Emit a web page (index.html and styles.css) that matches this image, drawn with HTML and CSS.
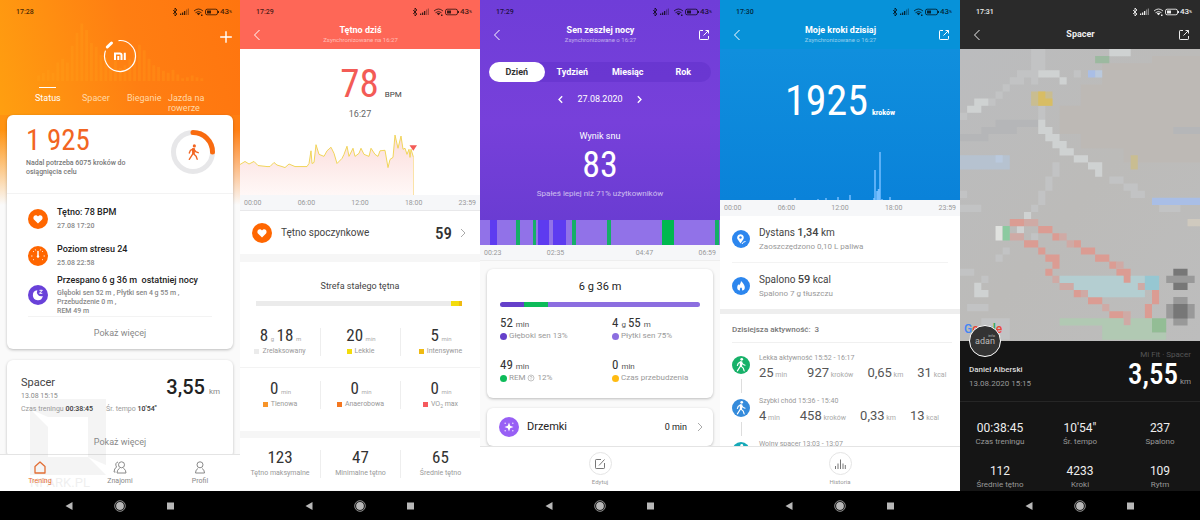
FILE: index.html
```html
<!DOCTYPE html>
<html lang="pl">
<head>
<meta charset="utf-8">
<title>Mi Fit</title>
<link rel="stylesheet" href="styles.css">
</head>
<body>
<svg class="defs" aria-hidden="true">
  <symbol id="i-status" viewBox="0 0 48 10"><g fill="none" stroke="currentColor" stroke-width=".9"><path d="M1 3l4 4-2 2V1l2 2-4 4"/><path d="M22 4q4.500-4 9 0M23.500 5.700q3-2.500 6 0"/><rect x="33.500" y="2.200" width="12" height="5.600" rx="1.700"/></g><g fill="currentColor"><path d="M8 8h1.300V6.500H8zM10 8h1.300V5.500H10zM12 8h1.300V4H12z"/><path opacity=".45" d="M14 8h1.200V2.500H14zM15.800 8H17V1.500h-1.200z"/><path d="M24.700 6.500q1.800-1.300 3.600 0L26.500 8.300zM29 7.500h1.500V9H29z"/><rect x="35" y="3.500" width="4" height="3"/><path d="M46 4h1v2h-1z"/></g></symbol>
  <symbol id="i-back" viewBox="0 0 10 12"><path d="M7.500 1L2.500 6l5 5" fill="none" stroke="currentColor"/></symbol>
  <symbol id="i-next" viewBox="0 0 10 12"><path d="M3 2l4 4-4 4" fill="none" stroke="currentColor"/></symbol>
  <symbol id="i-share" viewBox="0 0 12 12"><path d="M5 1.500H2.200Q1.500 1.500 1.500 2.200v7.600q0 .7.700.7h7.600q.7 0 .7-.7V7M7.500 1.500h3V4.500M10.500 1.500L5.500 6.500" fill="none" stroke="currentColor"/></symbol>
  <symbol id="i-heart" viewBox="0 0 20 20"><circle cx="10" cy="10" r="10" fill="#f60"/><path d="M10 14.600L6.200 10.800C4.700 9.200 5.500 6.300 7.700 6.200c1.100 0 1.900.6 2.300 1.300.4-.7 1.200-1.300 2.300-1.300 2.200.1 3 3 1.500 4.600z" fill="#fff"/></symbol>
  <symbol id="i-walk" viewBox="0 0 20 20"><g fill="none" stroke="currentColor" stroke-width="1.300" stroke-linecap="round" stroke-linejoin="round"><path d="M10 6.500L9.500 11l-3.500 5.500M9.800 11l2.700 2.500 1 3M6 10.500L7 8l3-1.500 2.500 3 2 .7"/></g><path d="M8.500 6h3l-.3 5.500H8.800z" fill="currentColor"/><circle cx="10.800" cy="3.700" r="1.500" fill="currentColor"/></symbol>
  <symbol id="i-sys-back" viewBox="0 0 10 10"><path d="M8.500 1v8L1.500 5z" fill="currentColor"/></symbol>
  <symbol id="i-sys-home" viewBox="0 0 12 12"><circle cx="6" cy="6" r="5.300" fill="none" stroke="currentColor" stroke-width=".8"/><circle cx="6" cy="6" r="3.900" fill="currentColor"/></symbol>
  <symbol id="i-sys-app" viewBox="0 0 10 10"><path d="M1 1.500h7v7H1z" fill="currentColor"/></symbol>
</svg>

<main class="phones">

<section class="phone home" aria-label="Status">
  <div class="screen">
    <div class="hero">
      <div class="statusbar"><time>17:28</time><span class="sys"><svg><use href="#i-status"/></svg>43<small>%</small></span></div>
      <div class="brand">
        <svg class="histogram" viewBox="0 0 200 70" preserveAspectRatio="none" aria-hidden="true"><path d="M10 70v-6m5 6v-9m5 9v-12m5 12v-9m5 9v-20m5 20v-24m5 24v-20m5 20v-38m5 38v-52m5 52v-62m5 62v-55m5 55v-41m5 41v-37m5 37v-28m5 28v-25m5 25v-15m5 15v-22m5 22v-14m5 14v-17m5 17v-24m5 24v-32m5 32v-39m5 39v-33m5 33v-24m5 24v-17m5 17v-15m5 15v-11m5 11v-9m5 9v-12m5 12v-7m5 7v-3m5 3v-4m5 4v-6m5 6v-4m5 4v-3" stroke="#ffa51d" stroke-width="3" opacity=".24"/></svg>
        <svg class="logo" viewBox="0 0 34 34" aria-label="Mi"><path d="M15.500 1.600a15.500 15.500 0 1 1-13 10" fill="none" stroke="#fff" stroke-width="1.200"/><path d="M4.300 8L8.500 4" stroke="#fff" stroke-width="3" stroke-linecap="round"/><path d="M12 21v-6.500h5q1.500 0 1.500 1.500v5M15.300 17v4M21.800 13.700V21" fill="none" stroke="#fff" stroke-width="2"/></svg>
        <button class="plus" aria-label="Dodaj"><svg viewBox="0 0 12 12"><path d="M6 1v10M1 6h10" stroke="#fff" stroke-width="1.200"/></svg></button>
      </div>
      <nav class="tabs"><a class="on" href="#s">Status</a><a href="#w">Spacer</a><a href="#r">Bieganie</a><a href="#b">Jazda na rowerze</a></nav>
    </div>
    <article class="card summary">
      <div class="goal">
        <div><strong class="narrow">1 925</strong><p>Nadal potrzeba 6075 kroków do osiągnięcia celu</p></div>
        <svg class="ring" viewBox="0 0 46 46"><g fill="none" stroke-width="5"><circle cx="23" cy="23" r="19.500" stroke="#e7e7e9"/><path d="M23 3.500A19.500 19.500 0 0 1 42.500 23" stroke="#f96b10" stroke-linecap="round"/></g><use href="#i-walk" x="13" y="13" width="21" height="21" color="#f26522"/></svg>
      </div>
      <ul class="facts">
        <li><svg><use href="#i-heart"/></svg><div><b>Tętno: 78 BPM</b><p>27.08 17:20</p></div></li>
        <li><svg viewBox="0 0 20 20"><circle cx="10" cy="10" r="10" fill="#f60"/><path d="M10 5.500v5" stroke="#fff" stroke-width="1.500" stroke-linecap="round"/><path d="M3 10h1.500m11 0H17M5 5l1 1m8 0l1-1M7.300 3.300l.4 1.200m5-1.200l-.4 1.200M5 14l1-.7m8 0l1 .7" stroke="#fff" stroke-width=".8"/><circle cx="10" cy="10.500" r="1.200" fill="#fff"/></svg><div><b>Poziom stresu 24</b><p>25.08 22:58</p></div></li>
        <li><svg viewBox="0 0 20 20"><circle cx="10" cy="10" r="10" fill="#6941d9"/><path d="M9.300 5.200A5 5 0 1 0 14.800 11 4.300 4.300 0 0 1 9.300 5.200z" fill="#fff"/><path d="M11.500 5.300h2.800l-2.800 3h2.800" fill="none" stroke="#fff"/></svg><div><b>Przespano 6 g 36 m &nbsp;ostatniej nocy</b><p>Głęboki sen 52 m , Płytki sen 4 g 55 m , Przebudzenie 0 m ,<br>REM 49 m</p></div></li>
      </ul>
      <button class="more">Pokaż więcej</button>
    </article>
    <article class="card walk">
      <div class="walkhead"><div><h2>Spacer</h2><p>13.08 15:15</p></div><p class="km"><b>3,55</b> km</p></div>
      <p class="pace"><span>Czas treningu <b>00:38:45</b></span><span>Śr. tempo <b>10'54"</b></span></p>
      <button class="more">Pokaż więcej</button>
    </article>
    <nav class="bottomnav">
      <a class="on" href="#t"><svg viewBox="0 0 14 14"><path d="M2 12.500V6L7 1.500 12 6v6.500z" fill="none" stroke="currentColor" stroke-width="1.300" stroke-linejoin="round"/></svg>Trening</a>
      <a href="#z"><svg viewBox="0 0 14 14"><g fill="none" stroke="currentColor"><circle cx="8.500" cy="4.300" r="3"/><path d="M4 12.500q0-3 2.500-4.800M10.500 7.700q2.500 1.800 2.500 4.800H4M5 1.500Q1.500 2.500 3.500 6.500 1.200 8 1 11.500h1.500"/></g></svg>Znajomi</a>
      <a href="#p"><svg viewBox="0 0 14 14"><g fill="none" stroke="currentColor"><circle cx="7" cy="4.300" r="3"/><path d="M5 8Q2.500 9 2.500 12.500h9Q11.500 9 9 8"/></g></svg>Profil</a>
    </nav>
    <div class="watermark" aria-hidden="true"><svg viewBox="0 0 76 76"><path d="M0 0h76v66L58 58V18H18L0 10zM0 10l18 18v30h40l18 18H0z" fill="#8a8a8a"/></svg><span>NPARK.PL</span></div>
  </div>
  <nav class="sysnav"><button aria-label="Wstecz"><svg><use href="#i-sys-back"/></svg></button><button aria-label="Ekran główny"><svg><use href="#i-sys-home"/></svg></button><button aria-label="Aplikacje"><svg><use href="#i-sys-app"/></svg></button></nav>
</section>

<section class="phone heart" aria-label="Tętno">
  <div class="screen">
    <div class="statusbar"><time>17:29</time><span class="sys"><svg><use href="#i-status"/></svg>43<small>%</small></span></div>
    <header class="titlebar"><button aria-label="Wstecz"><svg><use href="#i-back"/></svg></button><div><h1>Tętno dziś</h1><p>Zsynchronizowane na 16:27</p></div><span></span></header>
    <div class="bpm"><p class="bpmvalue"><b>78</b><span>BPM</span></p><time>16:27</time></div>
    <svg class="hrchart" viewBox="0 0 240 62" preserveAspectRatio="none" aria-label="Wykres tętna">
      <defs><linearGradient id="hr" x2="0" y2="1"><stop stop-color="#fbdcda"/><stop offset="1" stop-color="#fff8f7"/></linearGradient></defs>
      <path fill="url(#hr)" d="M0 32L5 29 9 31.500 14 29 18 33 27 34 30 34 34 30 37 32.500 42 34 45 35 49 31.500 55 34 67 34 69 31 71 18.500 72 31 74 30 76 12.500 79 22 84 24 87 18.500 91 15 94 21 97 31 102 26 104 22 107 14 109 24 113 16 115 24 119 21 121 16 124 22 129 24 131 16 135 22 138 24 140 18.500 145 18 148 35 150 27 153 25 155 3 158 16 161 4 163 17 165 16 167 22 169 17 170 25 171 17 173.500 25V62H0z"/>
      <path fill="none" stroke="#efd24c" stroke-width=".9" d="M0 32L5 29 9 31.500 14 29 18 33 27 34 30 34 34 30 37 32.500 42 34 45 35 49 31.500 55 34 67 34 69 31 71 18.500 72 31 74 30 76 12.500 79 22 84 24 87 18.500 91 15 94 21 97 31 102 26 104 22 107 14 109 24 113 16 115 24 119 21 121 16 124 22 129 24 131 16 135 22 138 24 140 18.500 145 18 148 35 150 27 153 25 155 3 158 16 161 4 163 17 165 16 167 22 169 17 170 25 171 17 173.500 25"/><path d="M173.500 24v38" stroke="#fae3a8"/><path d="M169.500 13h7.500l-3.700 5.500z" fill="#f35b56"/>
    </svg>
    <div class="axis"><span>00:00</span><span>06:00</span><span>12:00</span><span>18:00</span><span>23:59</span></div>
    <a class="resting" href="#rest"><svg class="badge"><use href="#i-heart"/></svg><span>Tętno spoczynkowe</span><b>59</b><svg class="chev"><use href="#i-next"/></svg></a>
    <section class="zones">
      <h2>Strefa stałego tętna</h2>
      <div class="zonebar"><i class="z0"></i><i class="z1"></i><i class="z2"></i></div>
      <div class="trio"><div><p><b>8</b> g <b>18</b> m</p><small><i class="z0"></i>Zrelaksowany</small></div><div><p><b>20</b> min</p><small><i class="z1"></i>Lekkie</small></div><div><p><b>5</b> min</p><small><i class="z2"></i>Intensywne</small></div></div>
      <div class="trio second"><div><p><b>0</b> min</p><small><i class="z3"></i>Tlenowa</small></div><div><p><b>0</b> min</p><small><i class="z4"></i>Anaerobowa</small></div><div><p><b>0</b> min</p><small><i class="z5"></i>VO<sub>2</sub>&nbsp;max</small></div></div>
    </section>
    <div class="trio totals"><div><p><b>123</b></p><small>Tętno maksymalne</small></div><div><p><b>47</b></p><small>Minimalne tętno</small></div><div><p><b>65</b></p><small>Średnie tętno</small></div></div>
  </div>
  <nav class="sysnav"><button aria-label="Wstecz"><svg><use href="#i-sys-back"/></svg></button><button aria-label="Ekran główny"><svg><use href="#i-sys-home"/></svg></button><button aria-label="Aplikacje"><svg><use href="#i-sys-app"/></svg></button></nav>
</section>

<section class="phone sleep" aria-label="Sen">
  <div class="screen">
    <div class="violet">
      <div class="statusbar"><time>17:29</time><span class="sys"><svg><use href="#i-status"/></svg>43<small>%</small></span></div>
      <header class="titlebar"><button aria-label="Wstecz"><svg><use href="#i-back"/></svg></button><div><h1>Sen zeszłej nocy</h1><p>Zsynchronizowane o 16:27</p></div><button aria-label="Udostępnij"><svg><use href="#i-share"/></svg></button></header>
      <div class="segments"><button class="on">Dzień</button><button>Tydzień</button><button>Miesiąc</button><button>Rok</button></div>
      <div class="date"><button aria-label="Poprzedni"><svg viewBox="0 0 8 8"><path d="M5.500 1.200L2.700 4l2.800 2.800" fill="none" stroke="currentColor" stroke-width="1.200"/></svg></button><time>27.08.2020</time><button aria-label="Następny"><svg viewBox="0 0 8 8"><path d="M2.500 1.200L5.300 4 2.500 6.800" fill="none" stroke="currentColor" stroke-width="1.200"/></svg></button></div>
      <div class="score"><h2>Wynik snu</h2><strong class="narrow">83</strong><p>Spałeś lepiej niż 71% użytkowników</p></div>
      <svg class="phases" viewBox="0 0 240 25" preserveAspectRatio="none" shape-rendering="crispEdges" aria-label="Fazy snu"><path fill="#9172e8" d="M0 0h240v25H0z"/><path fill="#5d3bf0" d="M10 0h7v25h-7zM58 0h11v25H58zM73 0h13v25H73z"/><path fill="#16ae68" d="M36 0h4v25h-4zM53 0h3v25h-3zM92 0h4v25h-4zM127 0h4v25h-4zM235 0h4v25h-4z"/><path fill="#00b84f" d="M182 0h12v25h-12z"/></svg>
    </div>
    <div class="axis sleepaxis"><span>00:23</span><span>02:35</span><span>04:47</span><span>06:59</span></div>
    <article class="card split">
      <h2>6 g 36 m</h2>
      <div class="sleepbar"><i class="deep"></i><i class="rem"></i><i class="light"></i></div>
      <div class="quad">
        <div><p><b>52</b> min</p><small><i class="deep"></i>Głęboki sen 13%</small></div>
        <div><p><b>4</b> g <b>55</b> m</p><small><i class="light"></i>Płytki sen 75%</small></div>
        <div><p><b>49</b> min</p><small><i class="rem"></i>REM <svg viewBox="0 0 8 8"><circle cx="4" cy="4" r="3" fill="none" stroke="#aaa" stroke-width=".7"/><path d="M3 3.300q0-1 1-1t1 1L4 4.300v.5M4 5.500v.6" fill="none" stroke="#aaa" stroke-width=".7"/></svg> 12%</small></div>
        <div><p><b>0</b> min</p><small><i class="wake"></i>Czas przebudzenia</small></div>
      </div>
    </article>
    <a class="card naps" href="#naps"><svg class="badge" viewBox="0 0 20 20"><circle cx="10" cy="10" r="10" fill="#985ff5"/><path d="M10 5.500l1.200 3.300 3.300 1.200-3.300 1.200L10 14.500l-1.200-3.300L5.500 10l3.300-1.200z" fill="#fff"/><g fill="#e5d5ff"><circle cx="6.200" cy="6.200" r=".8"/><circle cx="13.800" cy="6.200" r=".8"/><circle cx="6.200" cy="13.800" r=".8"/><circle cx="13.800" cy="13.800" r=".8"/></g></svg><span>Drzemki</span><b>0 min</b><svg class="chev"><use href="#i-next"/></svg></a>
    <div class="dock"><button><span><svg viewBox="0 0 12 12"><path d="M7 1.500H2.200Q1.500 1.500 1.500 2.200v7.600q0 .7.700.7h7.600q.7 0 .7-.7V5M5 7.500l5.500-6" fill="none" stroke="#777"/></svg></span>Edytuj</button></div>
  </div>
  <nav class="sysnav"><button aria-label="Wstecz"><svg><use href="#i-sys-back"/></svg></button><button aria-label="Ekran główny"><svg><use href="#i-sys-home"/></svg></button><button aria-label="Aplikacje"><svg><use href="#i-sys-app"/></svg></button></nav>
</section>

<section class="phone steps" aria-label="Kroki">
  <div class="screen">
    <div class="statusbar"><time>17:30</time><span class="sys"><svg><use href="#i-status"/></svg>43<small>%</small></span></div>
    <header class="titlebar"><button aria-label="Wstecz"><svg><use href="#i-back"/></svg></button><div><h1>Moje kroki dzisiaj</h1><p>Zsynchronizowane o 16:27</p></div><button aria-label="Udostępnij"><svg><use href="#i-share"/></svg></button></header>
    <div class="blue"><p class="narrow"><strong>1925</strong><span>kroków</span></p>
      <svg viewBox="0 0 240 50" preserveAspectRatio="none" aria-label="Wykres kroków"><path d="M75 50v-2M98 50v-1M106 50v-2M118 50v-3M130 50v-5M154 50v-2M155 50V20M157 50v-9M158.500 50V39M160 50V2M162 50v-1M170 50v-3" stroke="#77beff" stroke-width="1.500"/></svg></div>
    <div class="axis"><span>00:00</span><span>06:00</span><span>12:00</span><span>18:00</span><span>23:59</span></div>
    <ul class="stats">
      <li><svg viewBox="0 0 18 18"><circle cx="9" cy="9" r="9" fill="#2c86ee"/><path d="M8.500 13.500L5.800 9.600C4.200 7.300 6 4.300 8.500 4.300s4.300 3 2.700 5.300z" fill="#fff"/><circle cx="8.500" cy="7.500" r="1.200" fill="#2c86ee"/><path d="M10 14q1-2.500 3.500-2.500" stroke="#fff" fill="none"/></svg><div><h2>Dystans <b>1,34</b> km</h2><p>Zaoszczędzono 0,10 L paliwa</p></div></li>
      <li><svg viewBox="0 0 18 18"><circle cx="9" cy="9" r="9" fill="#2c86ee"/><path d="M9 4q3.800 3.700 3.800 6.300Q12.800 13.500 10 13.500q.7-1.800-1-3.300-1.700 1.500-1 3.300-2.800 0-2.800-3.200 0-1.800 1.200-3.100l.8 1Q9 6.500 9 4z" fill="#fff"/></svg><div><h2>Spalono <b>59</b> kcal</h2><p>Spalono 7 g tłuszczu</p></div></li>
    </ul>
    <section class="activity">
      <h2>Dzisiejsza aktywność: &nbsp;3</h2>
      <ol>
        <li><svg class="dot green"><use href="#i-walk"/></svg><div><h3>Lekka aktywność 15:52 - 16:17</h3><p><span><b>25</b> min</span><span><b>927</b> kroków</span><span><b>0,65</b> km</span><span><b>31</b> kcal</span></p></div></li>
        <li><svg class="dot azure"><use href="#i-walk"/></svg><div><h3>Szybki chód 15:36 - 15:40</h3><p><span><b>4</b> min</span><span><b>458</b> kroków</span><span><b>0,33</b> km</span><span><b>13</b> kcal</span></p></div></li>
        <li><svg class="dot teal"><use href="#i-walk"/></svg><div><h3>Wolny spacer 13:03 - 13:07</h3></div></li>
      </ol>
    </section>
    <div class="dock"><button><span><svg viewBox="0 0 12 12"><path d="M1.500 11V8M4 11V5.500M6.500 11V1.500M9 11V5.500M11.300 11V7" stroke="#777"/></svg></span>Historia</button></div>
  </div>
  <nav class="sysnav"><button aria-label="Wstecz"><svg><use href="#i-sys-back"/></svg></button><button aria-label="Ekran główny"><svg><use href="#i-sys-home"/></svg></button><button aria-label="Aplikacje"><svg><use href="#i-sys-app"/></svg></button></nav>
</section>

<section class="phone route" aria-label="Spacer">
  <div class="screen">
    <div class="statusbar"><time>17:31</time><span class="sys"><svg><use href="#i-status"/></svg>43<small>%</small></span></div>
    <header class="titlebar"><button aria-label="Wstecz"><svg><use href="#i-back"/></svg></button><h1>Spacer</h1><button aria-label="Udostępnij"><svg><use href="#i-share"/></svg></button></header>
    <div class="map">
      <svg class="tiles" viewBox="0 0 33.750 41.200" preserveAspectRatio="none" aria-label="Mapa trasy">
        <defs><linearGradient id="land" x2="1" y2="1"><stop stop-color="#bbbcbe"/><stop offset=".5" stop-color="#bcbbb9"/><stop offset="1" stop-color="#bdbdbd"/></linearGradient></defs>
        <path fill="url(#land)" d="M0 0h34v42H0z"/>
        <path fill="#bdb9b5" d="M34 1H27v1H20v3H17v3H14v4h3v2h6v2h11z"/>
        <g fill="none" stroke-width="1.020">
          <path stroke="#b5b6b8" d="M30 11.500h4M3 11.500h5M0 12.500h4M5 10.500h6"/>
          <path stroke="#c2c3c4" d="M10 .5h2M10 1.500h2M10 2.500h2M8 3.500h3M16 3.500h1M7 4.500h2M10 4.500h1M6 5.500h1M5 6.500h1M4 7.500h1M0 9.500h1M11 8.500h1M11 9.500h1M13 16.500h1M13 17.500h1M12 18.500h1M12 19.500h1M11 20.500h1M11 21.500h1M10 22.500h1M21 18.500h2M23 19.500h2M24 20.500h2M28 22.500h3M0 20.500h1M0 22.500h3M6 28.500h1M5 29.500h1M10 26.500h1M0 31.500h2M3 32.500h1M1 36.500h3M3 38.500h4M3 39.500h4M3 40.500h4"/>
          <path stroke="#cfd2d2" d="M11 3.500h3M14 4.500h1M21 .5h3M2 7.500h2M1 8.500h2M11 10.500h1M11 11.500h2M12 12.500h2M13 13.500h2M14 14.500h2M16 15.500h2M18 16.500h2M19 17.500h1M9 23.500h1M2 33.500h1M2 34.500h2M8 25.500h1"/>
          <path stroke="#b6c2d0" d="M0 15.500h7M0 16.500h7"/><path stroke="#bac9dd" d="M5 15.500h1M19 3.500h1"/>
          <path stroke="#a9bee6" d="M18 3.500h1M27 21.500h7"/>
          <path stroke="#9cb9a0" d="M19 1.500h2"/>
          <path stroke="#c9bd91" d="M10 6.500h3M10 7.500h3M24 15.500h1M24 16.500h1"/><path stroke="#d8bd64" d="M11 6.500h1M11 7.500h2"/>
          <path stroke="#cfc9be" d="M32 24.500h2"/>
          <path stroke="#db9c93" d="M7 24.500h2M11 25.500h2M13 26.500h1M16 27.500h1M9 27.500h2M17 28.500h2M11 28.500h1M19 29.500h2M12 29.500h2M13 30.500h1M21 30.500h1M12 31.500h1M22 31.500h2M23 32.500h1M16 34.500h1M27 34.500h1M18 35.500h2M27 35.500h1M26 36.500h1M21 37.500h2M26 37.500h1"/>
          <path stroke="#cfaaa5" d="M9 24.500h2M14 26.500h1M7 26.500h2M15 27.500h1M14 33.500h2M25 33.500h1M17 34.500h1M20 36.500h1M23 37.500h1M13 32.500h1M22 30.500h1M23 38.500h1"/>
          <path stroke="#e0e2df" d="M5 25.500h1M5 26.500h1"/><path stroke="#8bcaa0" d="M6 25.500h1M6 26.500h1"/>
          <path stroke="#b4ced1" d="M14 32.500h9M16 33.500h9M18 34.500h8M24 32.500h2"/><path stroke="#96c7d2" d="M26 32.500h2M26 33.500h2"/>
          <path stroke="#b1c9b3" d="M14 38.500h9M24 38.500h3M20 39.500h7M20 40.500h9"/><path stroke="#93bd95" d="M27 38.500h2M27 39.500h2"/>
          <path stroke="#999" d="M29 32.500h4M30 35.500h2M29 36.500h4M29 37.500h4M30 38.500h2"/><path stroke="#777" d="M30 31.500h2M30 33.500h2M30 36.500h2M30 37.500h2"/>
        </g>
      </svg>
      <span class="google"><i class="g1">G</i><i class="g2">o</i><i class="g3">o</i><i class="g1">g</i><i class="g4">l</i><i class="g2">e</i></span>
      <span class="avatar">adan<small>info</small></span>
    </div>
    <div class="who"><div><b>Daniel Alberski</b><time>13.08.2020 15:15</time></div><div class="dist"><small>Mi Fit · Spacer</small><p><strong>3,55</strong> km</p></div></div>
    <dl class="grid"><div><dd>00:38:45</dd><dt>Czas treningu</dt></div><div><dd>10'54"</dd><dt>Śr. tempo</dt></div><div><dd>237</dd><dt>Spalono</dt></div><div><dd>112</dd><dt>Średnie tętno</dt></div><div><dd>4233</dd><dt>Kroki</dt></div><div><dd>109</dd><dt>Rytm</dt></div></dl>
  </div>
  <nav class="sysnav"><button aria-label="Wstecz"><svg><use href="#i-sys-back"/></svg></button><button aria-label="Ekran główny"><svg><use href="#i-sys-home"/></svg></button><button aria-label="Aplikacje"><svg><use href="#i-sys-app"/></svg></button></nav>
</section>

</main>
</body>
</html>
```
FILE: styles.css
```css
* { box-sizing: border-box; margin: 0; padding: 0; }
body { font-family: Roboto, "Noto Sans", sans-serif; font-size: 8px; line-height: 10px; color: #333; background: #000; }
button { border: 0; background: none; font: inherit; color: inherit; cursor: pointer; }
a { color: inherit; text-decoration: none; }
ul, ol { list-style: none; }
i { font-style: normal; }
svg { display: block; flex: none; }
.defs { position: absolute; width: 0; height: 0; }
.narrow { font-family: "Liberation Sans Narrow", "Roboto Condensed", Roboto, sans-serif; font-weight: 400; }

.phones { display: grid; grid-template-columns: repeat(5, minmax(0, 1fr)); height: 100vh; }
.phone { display: flex; flex-direction: column; min-height: 0; background: #fff; }
.screen { position: relative; flex: 1; min-height: 0; display: flex; flex-direction: column; overflow: hidden; }
.screen > * { flex: none; }

.statusbar { display: flex; justify-content: space-between; align-items: center; height: 24px; padding: 0 8px 0 16px; font-size: 7px; font-weight: 500; color: rgba(0, 0, 0, .75); }
.sys { display: flex; align-items: center; font-size: 8px; }
.sys svg { width: 48px; height: 10px; }
.sys small { font-size: 4px; align-self: end; }

.titlebar { display: grid; grid-template-columns: 20px 1fr 20px; align-items: center; height: 25px; padding: 0 6px 4px 7px; color: #fff; text-align: center; }
.titlebar button { display: grid; place-items: center; }
.titlebar svg { width: 12px; height: 12px; }
.titlebar h1 { font-size: 9px; line-height: 11px; font-weight: 700; }
.titlebar p { font-size: 6px; line-height: 8px; opacity: .55; }

.sysnav { display: flex; justify-content: center; gap: 40px; align-items: center; height: 29px; flex: none; background: #000; color: #b8b8b8; }
.sysnav svg { width: 10px; height: 10px; }
.sysnav button:nth-child(2) svg { width: 12px; height: 12px; }

.card { display: block; margin: 0 7px; background: #fff; border-radius: 6px; box-shadow: 0 1px 3px rgba(0, 0, 0, .25); }
.badge { width: 20px; height: 20px; }
.chev { width: 10px; height: 12px; color: #aaa; }
.axis { display: flex; justify-content: space-between; align-items: center; height: 16px; padding: 0 4px; background: #f6f7f9; color: #999; font-size: 7px; }

/* Home */
.home .screen { background: linear-gradient(to bottom, rgba(250, 250, 250, 0) 130px, #fafafa 205px), linear-gradient(75deg, #ff9f10, #ff7e12 75%); }
.hero { height: 115px; background: linear-gradient(75deg, #ff9f10, #ff7e12 55%, #ff750f); }
.brand { position: relative; display: grid; grid-template-columns: 1fr 34px 1fr; padding: 0 7px; align-items: center; height: 63px; }
.histogram { position: absolute; left: 12%; bottom: 6px; width: 80%; height: 65px; }
.logo { position: relative; grid-column: 2; width: 34px; height: 34px; }
.plus { align-self: start; justify-self: end; padding-top: 6px; }
.plus svg { width: 14px; height: 14px; }
.tabs { display: grid; grid-template-columns: 47px 45px 41px 1fr; padding: 0 27px 0 35px; font-size: 9px; line-height: 10px; color: #ffd9a8; }
.tabs a { padding-top: 6px; }
.tabs a.on { color: #fff; background: linear-gradient(#fff, #fff) 4px 0 / 17px 1px no-repeat; }
.goal { display: flex; justify-content: space-between; align-items: center; padding: 12px 17px 16px 19px; border-bottom: 1px solid #f3f3f3; }
.goal > div { width: 120px; }
.goal strong { display: block; font-size: 29px; line-height: 26px; color: #f26522; }
.goal p { margin-top: 6px; font-size: 7px; line-height: 9px; color: #777; font-weight: 500; }
.ring { width: 46px; height: 46px; }
.facts { margin: 0 21px; padding-top: 12px; border-bottom: 1px solid #f3f3f3; }
.facts li { display: flex; align-items: center; gap: 9px; }
.facts li:nth-child(1) { margin-bottom: 12px; }
.facts li:nth-child(2) { margin-bottom: 6px; }
.facts li > svg { width: 20px; height: 20px; }
.facts div { min-width: 0; }
.facts b { display: block; font-size: 9px; line-height: 12px; font-weight: 500; color: #222; white-space: nowrap; }
.facts p { padding-top: 3px; font-size: 7px; line-height: 9px; font-weight: 500; color: #888; }
.facts li:nth-child(-n+2) p { padding-top: 4px; }
.more { display: block; width: 100%; font-size: 9px; line-height: 11px; padding: 11px 0 10px; color: #888; }
.walk { margin-top: 11px; padding-top: 15px; }
.walkhead { display: flex; justify-content: space-between; align-items: end; padding: 0 13px 0 14px; color: #888; font-size: 7px; }
.walk h2 { font-size: 11px; line-height: 16px; font-weight: 400; color: #444; }
.walkhead p { line-height: 11px; }
.walkhead .km { font-size: 8px; line-height: 20px; }
.km b { font-size: 20px; font-weight: 500; color: #222; padding-right: 2px; }
.pace { display: flex; gap: 13px; padding: 2px 14px 12px; font-size: 7px; color: #999; }
.pace b { font-weight: 500; color: #333; }
.bottomnav, .dock { position: absolute; left: 0; right: 0; bottom: 0; background: #fff; border-top: 1px solid #e4e4e4; }
.bottomnav { display: grid; grid-template-columns: repeat(3, 1fr); height: 37px; padding-top: 5px; font-size: 7px; line-height: 12px; color: #888; }
.bottomnav a { display: flex; flex-direction: column; align-items: center; }
.bottomnav .on { color: #ec6c2c; }
.bottomnav svg { width: 14px; height: 15px; }
.watermark { position: absolute; left: 30px; bottom: 0; opacity: .09; color: #555; font-size: 13px; line-height: 16px; }
.watermark svg { width: 76px; height: 76px; }
.watermark span { display: block; }

/* Heart rate */
.heart .statusbar, .heart .titlebar { background: #fe6757; }
.bpm { padding-top: 16px; text-align: center; color: #666; }
.bpm time { display: block; font-size: 9px; line-height: 12px; }
.bpmvalue { display: flex; justify-content: center; align-items: baseline; gap: 6px; padding-left: 22px; font-size: 8px; color: #444; margin-bottom: 5px; }
.bpmvalue b { font-family: "Roboto Condensed", Roboto, sans-serif; font-size: 39px; line-height: 38px; font-weight: 400; color: #f35b56; }
.hrchart { width: 100%; height: 75px; padding-top: 12px; }
.heart .axis { border-bottom: 1px solid #e8e8ea; }
.resting { display: flex; align-items: center; height: 43px; padding: 0 12px; gap: 9px; color: #444; }
.resting span { flex: 1; font-size: 10px; }
.resting b { font-family: "Roboto Condensed", Roboto, sans-serif; font-size: 17px; font-weight: 500; color: #333; margin-right: -3px; }
.zones { border-top: 8px solid #f6f6f6; padding: 18px 16px 22px; text-align: center; }
.zones h2 { font-size: 9px; line-height: 12px; font-weight: 400; color: #444; }
.zonebar { display: flex; height: 5px; margin: 9px 2px 0 0; }
.zonebar i { flex: 188; }
.zonebar .z1 { flex: 8; }
.zonebar .z2 { flex: 3; }
.z0 { background: #ebebeb; } .z1 { background: #f3dc0c; } .z2 { background: #efba12; } .z3 { background: #f79429; } .z4 { background: #f47720; } .z5 { background: #f5595d; }
.trio { display: grid; grid-template-columns: repeat(3, 1fr); text-align: center; }
.zones .trio { margin: 22px -16px 0; }
.zones .second { margin-top: 11px; border-top: 1px solid #f3f3f3; padding-top: 13px; }
.trio > div + div { border-left: 1px solid #eee; }
.trio p { font-size: 6px; line-height: 14px; color: #aaa; }
.trio b { font-family: "Roboto Condensed", Roboto, sans-serif; font-size: 17px; font-weight: 400; color: #333; margin: 0 1px; }
.trio small { display: flex; justify-content: center; align-items: center; font-size: 7px; line-height: 10px; color: #999; }
.trio small i { width: 5px; height: 5px; margin-right: 3px; }
.trio sub { font-size: 5px; align-self: end; line-height: 6px; }
.totals { border-top: 7px solid #f6f6f6; border-bottom: 12px solid #f6f6f6; padding: 12px 0; }

/* Sleep */
.sleep .screen { background: #fafafa; }
.violet { background: linear-gradient(#6f3dd8, #7740da 50%, #673bd0); color: #fff; }
.segments { display: grid; grid-template-columns: repeat(4, 1fr); height: 20px; margin: 13px 9px 0; border-radius: 10px; background: rgba(60, 20, 170, .18); font-size: 9px; font-weight: 700; }
.segments .on { background: #fff; color: #333; border-radius: 10px; }
.date { display: flex; justify-content: center; align-items: center; gap: 12px; margin-top: 11px; font-size: 9px; line-height: 12px; }
.date svg { width: 9px; height: 9px; }
.score { padding: 25px 0 21px; text-align: center; }
.score h2 { font-size: 9px; line-height: 12px; font-weight: 400; }
.score strong { display: block; font-size: 36px; line-height: 42px; padding: 2px 0; }
.score p { font-size: 8px; line-height: 11px; opacity: .65; }
.phases { width: 100%; height: 25px; }
.sleep .axis { margin-bottom: 8px; border-bottom: 1px solid #eee; }
.sleepaxis span:nth-child(2) { margin-right: 26px; }
.split { padding: 11px 13px 15px; }
.split h2 { font-size: 11px; line-height: 13px; font-weight: 400; text-align: center; color: #222; }
.sleepbar { display: flex; height: 5px; margin-top: 9px; border-radius: 3px; overflow: hidden; }
.sleepbar .deep { flex: 12; } .sleepbar .rem { flex: 12; } .sleepbar .light { flex: 76; }
.deep { background: #6540ca; } .rem { background: #0dbb59; } .light { background: #8c6ee0; } .wake { background: #ffbb12; }
.quad { display: grid; grid-template-columns: 1fr 1fr; row-gap: 17px; column-gap: 24px; padding-top: 9px; }
.quad p { font-size: 8px; line-height: 13px; color: #555; }
.quad b { font-family: "Roboto Condensed", Roboto, sans-serif; font-size: 13px; font-weight: 400; color: #333; margin-right: 1px; }
.quad small { display: flex; align-items: center; gap: 2px; font-size: 8px; line-height: 10px; color: #999; white-space: nowrap; }
.quad i { width: 7px; height: 7px; border-radius: 50%; }
.quad svg { width: 8px; height: 8px; }
.naps { display: flex; align-items: center; margin-top: 10px; height: 38px; padding: 0 8px 0 12px; gap: 8px; color: #222; font-size: 11px; }
.naps span { flex: 1; }
.naps b { font-size: 9px; font-weight: 400; }
.dock { height: 45px; text-align: center; color: #999; font-size: 6px; line-height: 10px; }
.dock button { padding-top: 5px; }
.dock span { display: grid; place-items: center; width: 23px; height: 23px; margin: 0 auto 2px; border: 1px solid #e5e5e5; border-radius: 50%; }
.dock svg { width: 12px; height: 12px; }

/* Steps */
.steps .statusbar, .steps .titlebar { background: #0792d9; }
.blue { background: linear-gradient(#108fdd, #0a82d9); color: #fff; }
.blue p { display: flex; justify-content: center; align-items: baseline; gap: 4px; padding: 28px 0 25px; font-size: 8px; font-weight: 700; }
.blue strong { font-size: 42px; line-height: 48px; font-weight: 400; }
.blue svg { width: 100%; height: 50px; }
.stats li { display: flex; align-items: center; gap: 9px; height: 47px; padding: 0 12px; }
.stats li:first-child { height: 46px; }
.stats li + li { background: linear-gradient(#f3f3f3, #f3f3f3) 12px 0 / calc(100% - 24px) 1px no-repeat; }
.stats svg { width: 18px; height: 18px; }
.stats h2 { font-size: 10px; line-height: 13px; font-weight: 400; color: #444; }
.stats b { font-size: 11px; font-weight: 500; }
.stats p { padding-top: 2px; font-size: 8px; line-height: 11px; color: #999; }
.activity { border-top: 5px solid #eee; padding: 10px 8px 0 12px; }
.activity h2 { font-size: 8px; line-height: 12px; font-weight: 500; color: #777; padding-bottom: 6px; border-bottom: 1px solid #f0f0f0; }
.activity li { display: flex; gap: 9px; height: 43px; }
.activity ol { padding-top: 9px; }
.activity li > div { flex: 1; }
.activity li:not(:last-child) { background: linear-gradient(#ddd, #ddd) 9px 27px / 1px 14px no-repeat; }
.dot { width: 18px; height: 18px; margin-top: 4px; border-radius: 50%; color: #fff; }
.green { background: #17b169; } .azure { background: #358bdb; } .teal { background: #16a9b8; }
.activity h3 { font-size: 7px; line-height: 12px; font-weight: 400; color: #999; }
.activity p { display: flex; gap: 14px; font-size: 7px; line-height: 17px; color: #aaa; white-space: nowrap; }
.activity p span:first-child { margin-right: 6px; }
.activity p b { font-size: 13px; font-weight: 400; color: #555; }

/* Route */
.route .screen { background: #151515; color: #fff; }
.route .statusbar, .route .titlebar { background: #2a2a2a; color: #eee; }
.map { position: relative; }
.route .screen > .map { flex: 1 1 0; min-height: 0; }
.tiles { width: 100%; height: 100%; }
.google { position: absolute; left: 4px; bottom: 5px; font: 500 12px/14px Roboto, sans-serif; }
.g1 { color: #4285f4; } .g2 { color: #ea4335; } .g3 { color: #fbbc05; } .g4 { color: #34a853; }
.avatar { position: absolute; left: 9px; bottom: -16px; width: 32px; height: 32px; border: 1px solid #fff; border-radius: 50%; background: #333; color: #bbb; text-align: center; font-size: 9px; line-height: 30px; z-index: 1; }
.avatar small { position: absolute; right: 5px; top: 8px; font-size: 4px; line-height: 4px; }
.who { display: flex; justify-content: space-between; padding: 8px 9px 12px; border-bottom: 1px solid #262626; color: #999; }
.who b { display: block; margin-top: 15px; font-size: 8px; line-height: 12px; font-weight: 500; color: #ddd; }
.who time { display: block; margin-top: 2px; line-height: 11px; font-size: 8px; }
.dist { text-align: right; }
.dist small { display: block; font-size: 8px; line-height: 11px; color: #555; }
.dist strong { font-family: "Roboto Condensed", Roboto, sans-serif; font-size: 29px; font-weight: 500; line-height: 28px; color: #fff; }
.grid { display: grid; grid-template-columns: repeat(3, 1fr); row-gap: 15px; padding-top: 18px; text-align: center; }
.grid dd { font-size: 12px; line-height: 16px; color: #eee; }
.grid dt { font-size: 8px; line-height: 12px; color: #999; }
```
